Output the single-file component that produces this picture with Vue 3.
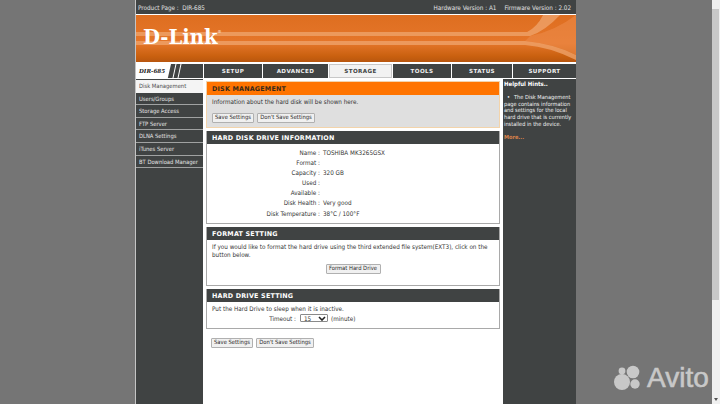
<template>
  <div class="page">
    <div class="frame">
      <div class="topbar">
        <span>Product Page :&nbsp; DIR-685</span>
        <span class="versions"><span>Hardware Version : A1</span><span>Firmware Version : 2.02</span></span>
      </div>

      <div class="banner">
        <svg class="swoosh" viewBox="0 0 441 47" preserveAspectRatio="none">
          <path d="M395 21 Q420 16 441 0 V40 Q420 29 390 26Z" fill="#ec8d4c" opacity="0.55" />
          <path d="M408 0 H425 Q410 16 395 21 H0 V17 H392 Q402 12 408 0Z" fill="#efa56f" opacity="0.75" />
          <path d="M0 26 H390 Q420 29 441 40 V45 Q415 32 390 30 H0Z" fill="#efa56f" opacity="0.75" />
        </svg>
        <span class="logo">D-Link<sup>®</sup></span>
      </div>

      <div class="nav">
        <div class="model">
          <span class="model-name">DIR-685</span>
          <svg width="14" height="14" viewBox="0 0 14 14"><path d="M1 14 L4 0 M6 14 L9 0" stroke="#fff" stroke-width="1" fill="none" /></svg>
        </div>
        <div v-for="tab in tabs" :key="tab" class="tab" :class="{ active: tab === 'STORAGE' }">{{ tab }}</div>
      </div>

      <div class="body">
        <div class="sidebar">
          <div v-for="item in menu" :key="item" class="menu-item" :class="{ active: item === 'Disk Management' }">{{ item }}</div>
        </div>

        <div class="content">
          <section class="box intro">
            <h2>DISK MANAGEMENT</h2>
            <p>Information about the hard disk will be shown here.</p>
            <div class="actions">
              <button class="save">Save Settings</button>
              <button class="nosave">Don't Save Settings</button>
            </div>
          </section>

          <section class="box info">
            <h2>HARD DISK DRIVE INFORMATION</h2>
            <div class="rows">
              <div v-for="row in diskInfo" :key="row.label" class="row">
                <span class="label">{{ row.label }} :</span>
                <span>{{ row.value }}</span>
              </div>
            </div>
          </section>

          <section class="box format">
            <h2>FORMAT SETTING</h2>
            <p>If you would like to format the hard drive using the third extended file system(EXT3), click on the button below.</p>
            <div class="center"><button class="format-btn">Format Hard Drive</button></div>
          </section>

          <section class="box sleep">
            <h2>HARD DRIVE SETTING</h2>
            <p>Put the Hard Drive to sleep when it is inactive.</p>
            <div class="timeout">
              <span class="timeout-label">Timeout :</span>
              <span class="select"><span>15</span><svg width="8" height="5" viewBox="0 0 8 5"><path d="M1 1l3 3 3-3" fill="none" stroke="#222" stroke-width="1.6" /></svg></span>
              <span>(minute)</span>
            </div>
          </section>

          <div class="actions bottom">
            <button class="save">Save Settings</button>
            <button class="nosave">Don't Save Settings</button>
          </div>
        </div>

        <div class="hints">
          <strong>Helpful Hints..</strong>
          <ul>
            <li>The Disk Management page contains information and settings for the local hard drive that is currently installed in the device.</li>
          </ul>
          <a>More...</a>
        </div>
      </div>
    </div>

    <div class="scrollbar"><span class="thumb"></span><span class="arrow"></span></div>

    <div class="watermark">
      <svg width="28" height="26" viewBox="0 0 28 26">
        <circle cx="8" cy="17" r="8" fill="#c8c8c8" />
        <circle cx="8" cy="6" r="3.4" fill="#c8c8c8" />
        <circle cx="19" cy="7" r="6.3" fill="#c8c8c8" />
        <circle cx="21" cy="19" r="4.7" fill="#c8c8c8" />
      </svg>
      <span>Avito</span>
    </div>
  </div>
</template>

<script setup>
const tabs = ["SETUP", "ADVANCED", "STORAGE", "TOOLS", "STATUS", "SUPPORT"];

const menu = [
  "Disk Management",
  "Users/Groups",
  "Storage Access",
  "FTP Server",
  "DLNA Settings",
  "iTunes Server",
  "BT Download Manager"
];

const diskInfo = [
  { label: "Name", value: "TOSHIBA MK3265GSX" },
  { label: "Format", value: "" },
  { label: "Capacity", value: "320 GB" },
  { label: "Used", value: "" },
  { label: "Available", value: "" },
  { label: "Disk Health", value: "Very good" },
  { label: "Disk Temperature", value: "38°C / 100°F" }
];
</script>

<style>
html,
body {
  margin: 0;
  overflow: hidden;
}
</style>

<style scoped>
.page {
  position: relative;
  width: 720px;
  height: 404px;
  overflow: hidden;
  background: #757575;
  font-family: "DejaVu Sans", sans-serif;
  font-stretch: condensed;
  font-size: 6.3px;
  color: #333;
}

.frame {
  width: 441px;
  height: 404px;
  margin-left: 135px;
  box-sizing: border-box;
  border-left: 1px solid #c4c4c4;
  background: #fff;
  display: flex;
  flex-direction: column;
}

.topbar {
  height: 14px;
  flex-shrink: 0;
  background: #404343;
  color: #e4e4e4;
  display: flex;
  justify-content: space-between;
  align-items: center;
  padding: 0 5px 0 2px;
}

.versions {
  display: flex;
  gap: 8px;
}

.banner {
  position: relative;
  height: 47px;
  flex-shrink: 0;
  margin-top: 1px;
  background: linear-gradient(#de6e20 0%, #e5762a 60%, #c9600f 88%, #b8560f 100%);
  overflow: hidden;
}

.swoosh {
  position: absolute;
  inset: 0;
  width: 100%;
  height: 100%;
}

.logo {
  position: absolute;
  left: 7px;
  top: 11px;
  font-family: "DejaVu Serif", serif;
  font-stretch: normal;
  font-weight: bold;
  font-size: 19.6px;
  line-height: 23px;
  color: #fff;
}

.logo sup {
  position: absolute;
  font-size: 4px;
  line-height: 1;
  top: 4px;
  font-weight: normal;
}

.nav {
  display: grid;
  grid-template-columns: 67px 58px 65px 63px 58px 60px 63px;
  gap: 1px;
  flex-shrink: 0;
  margin-top: 2px;
  height: 14px;
}

.model {
  background: #404343;
  display: flex;
  align-items: stretch;
  gap: 1px;
}

.model-name {
  width: 35px;
  padding-right: 3px;
  box-sizing: border-box;
  background: #fff;
  clip-path: polygon(0 0, 100% 0, 91% 100%, 0 100%);
  color: #222;
  font-family: "DejaVu Serif", serif;
  font-stretch: normal;
  font-style: italic;
  font-weight: bold;
  font-size: 5.6px;
  line-height: 14px;
  text-align: center;
}

.tab {
  background: #404343;
  color: #f0f0f0;
  font-stretch: normal;
  font-weight: bold;
  font-size: 5.6px;
  letter-spacing: 0.4px;
  display: flex;
  align-items: center;
  justify-content: center;
}

.tab.active {
  background: #f2f2f2;
  color: #404343;
  box-shadow: inset 0 0 0 1px #c8c8c8;
}

.body {
  flex: 1;
  display: flex;
  min-height: 0;
  margin-top: 1px;
}

.sidebar {
  width: 67px;
  flex-shrink: 0;
  background: #404343;
  padding-top: 1px;
  box-sizing: border-box;
}

.menu-item {
  height: 12.6px;
  line-height: 13px;
  box-sizing: border-box;
  padding-left: 3px;
  color: #e4e4e4;
  font-size: 5.8px;
  border-bottom: 1px solid #a0a2a2;
}

.menu-item.active {
  background: #f4f4f4;
  color: #4a4a4a;
  border-bottom-color: #f4f4f4;
}

.content {
  width: 300px;
  flex-shrink: 0;
  box-sizing: border-box;
  padding: 2px 3px 0 3px;
  display: flex;
  flex-direction: column;
  gap: 3px;
}

.box {
  flex-shrink: 0;
  box-sizing: border-box;
  border: 1px solid #a9a9a9;
  border-top: 0;
}

.box h2 {
  margin: 0;
  height: 13px;
  line-height: 14px;
  background: #404343;
  color: #fff;
  font-stretch: normal;
  font-size: 6.4px;
  letter-spacing: 0.2px;
  font-weight: bold;
  padding-left: 5px;
}

.box p {
  margin: 0;
  padding: 3px 5px 0;
  line-height: 7.5px;
}

.intro {
  height: 47px;
  background: #dfdfdf;
  border: 1px solid #f3d4ab;
}

.intro h2 {
  background: #ff7400;
  color: #3a2a1a;
}

.actions {
  display: flex;
  gap: 3px;
  padding: 7px 5px 0;
}

button {
  height: 10px;
  padding: 0;
  margin: 0;
  background: #f0f0f0;
  border: 1px solid #b0b0b0;
  border-radius: 1px;
  color: #2a2a2a;
  font-family: inherit;
  font-stretch: condensed;
  font-size: 5.8px;
  line-height: 1;
}

.save {
  width: 42px;
}

.nosave {
  width: 58px;
}

.format-btn {
  width: 55px;
}

.info {
  height: 93px;
}

.rows {
  padding-top: 3px;
}

.row {
  display: flex;
  gap: 3px;
  height: 10px;
  align-items: center;
}

.row:last-child {
  margin-top: 1px;
}

.label {
  width: 113px;
  text-align: right;
  flex-shrink: 0;
}

.format {
  height: 59px;
}

.center {
  display: flex;
  justify-content: center;
  padding-top: 6px;
}

.sleep {
  height: 40px;
}

.timeout {
  display: flex;
  align-items: center;
  gap: 3px;
  height: 9px;
  margin-top: 1px;
}

.timeout-label {
  width: 89px;
  margin-right: 1px;
  text-align: right;
}

.select {
  width: 28px;
  height: 8px;
  border: 1px solid #8a8a8a;
  border-radius: 1px;
  box-sizing: border-box;
  display: flex;
  align-items: center;
  justify-content: space-between;
  padding: 0 1px 0 3px;
}

.bottom {
  padding-top: 6px;
}

.hints {
  flex: 1;
  background: #404343;
  color: #f4f4f4;
  font-size: 5.6px;
  line-height: 6.8px;
  padding: 2px 1px;
  box-sizing: border-box;
}

.hints strong {
  color: #fff;
  display: block;
  font-size: 6px;
}

.hints ul {
  margin: 6px 0 6px;
  padding: 0;
  list-style: none;
}

.hints li::before {
  content: "•";
  margin: 0 4px 0 3px;
}

.hints a {
  color: #d9824a;
  font-weight: bold;
}

.scrollbar {
  position: absolute;
  right: 0;
  top: 0;
  width: 8px;
  height: 100%;
  background: #f0f0f0;
}

.thumb {
  position: absolute;
  left: 0;
  right: 1px;
  top: 9px;
  height: 291px;
  background: #c8c8c8;
}

.arrow {
  position: absolute;
  left: 2px;
  bottom: 3px;
  border-left: 2px solid transparent;
  border-right: 2px solid transparent;
  border-top: 3px solid #555;
}

.watermark {
  position: absolute;
  left: 614px;
  top: 365px;
  display: flex;
  align-items: center;
  gap: 5px;
  color: #c8c8c8;
  font-family: "Liberation Sans", sans-serif;
  font-stretch: normal;
  font-size: 28px;
  line-height: 26px;
  -webkit-text-stroke: 0.6px #c8c8c8;
}
</style>
